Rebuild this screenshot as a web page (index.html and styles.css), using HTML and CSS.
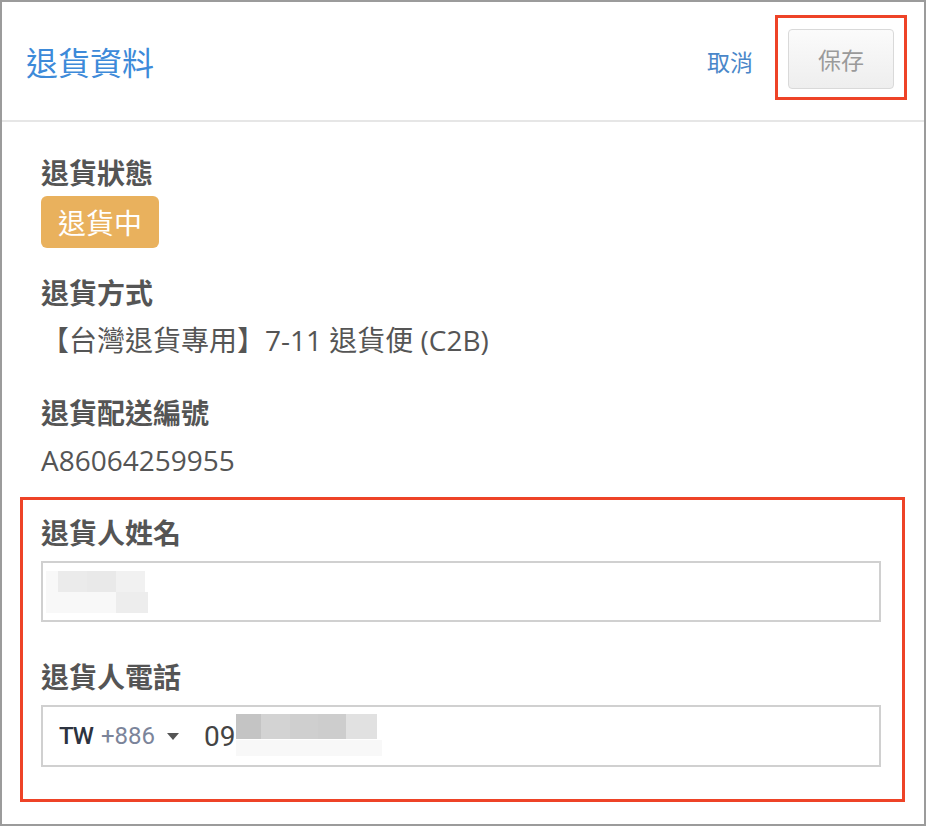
FILE: index.html
```html
<!DOCTYPE html>
<html lang="zh-Hant">
<head>
<meta charset="utf-8">
<title>退貨資料</title>
<link rel="stylesheet" href="styles.css">
</head>
<body>
<div class="panel">
  <header class="header">
    <h1 class="title">退貨資料</h1>
    <a class="cancel">取消</a>
    <div class="mark mark-save">
      <button class="save" type="button">保存</button>
    </div>
  </header>
  <main class="body">
    <div class="info">
      <div class="label">退貨狀態</div>
      <div class="badge">退貨中</div>
      <div class="label label-gap-s">退貨方式</div>
      <div class="value">【台灣退貨專用】7-11 退貨便 (C2B)</div>
      <div class="label label-gap-l">退貨配送編號</div>
      <div class="value">A86064259955</div>
    </div>
    <div class="mark mark-form">
      <div class="label">退貨人姓名</div>
      <div class="field field-name">
        <svg class="blur" width="103" height="42" viewBox="0 0 103 42">
          <rect x="0" y="0" width="12" height="21" fill="#f8f8f8"/>
          <rect x="12" y="0" width="29" height="21" fill="#ebebeb"/>
          <rect x="41" y="0" width="29" height="21" fill="#e9e9e9"/>
          <rect x="70" y="0" width="29" height="21" fill="#f1f1f1"/>
          <rect x="0" y="21" width="70" height="21" fill="#f8f8f8"/>
          <rect x="70" y="21" width="32" height="21" fill="#ededed"/>
        </svg>
      </div>
      <div class="label label-gap-l">退貨人電話</div>
      <div class="field field-phone">
        <span class="country">TW</span>
        <span class="code">+886</span>
        <span class="caret"></span>
        <span class="num">09</span>
        <svg class="blur2" width="146" height="42" viewBox="0 0 146 42">
          <rect x="0" y="0" width="25" height="25" fill="#c4c4c4"/>
          <rect x="25" y="0" width="29" height="25" fill="#d3d3d3"/>
          <rect x="54" y="0" width="28" height="25" fill="#cfcfcf"/>
          <rect x="82" y="0" width="28" height="25" fill="#cdcdcd"/>
          <rect x="110" y="0" width="31" height="25" fill="#e1e1e1"/>
          <rect x="0" y="26" width="146" height="16" fill="#f8f8f8"/>
        </svg>
      </div>
    </div>
  </main>
</div>
</body>
</html>
```

FILE: styles.css
```css
* { box-sizing: border-box; }
html, body { margin: 0; padding: 0; background: #fff; }
body {
  font-family: "Open Sans", "Noto Sans CJK TC", sans-serif;
  color: #555;
}
.panel {
  width: 926px;
  height: 826px;
  border: 2px solid #9b9b9b;
  overflow: hidden;
}
.header {
  display: flex;
  align-items: center;
  height: 120px;
  padding: 0 17px 0 24px;
  border-bottom: 2px solid #e6e6e6;
}
.title {
  flex: 1;
  margin: 0;
  font-family: "Noto Sans CJK TC", sans-serif;
  font-weight: 400;
  font-size: 32px;
  line-height: 40px;
  color: #3d8ad9;
}
.cancel {
  font-family: "Noto Sans CJK TC", sans-serif;
  font-size: 23px;
  color: #4a87c9;
  margin-right: 22px;
  cursor: pointer;
}
.mark {
  border: 3px solid #ee4327;
}
.mark-save {
  padding: 11px 10px 8px 10px;
  margin-top: -7px;
}
.save {
  display: block;
  width: 106px;
  height: 60px;
  border: 1px solid #d9d9d9;
  border-radius: 4px;
  background: linear-gradient(#fbfbfb, #eeeeee);
  font-family: "Noto Sans CJK TC", sans-serif;
  font-size: 23px;
  color: #9a9a9a;
  padding: 0;
}
.body {
  padding: 32px 19px 0 18px;
}
.info {
  padding-left: 21px;
}
.label {
  font-family: "Noto Sans CJK TC", sans-serif;
  font-weight: 700;
  font-size: 28px;
  line-height: 36px;
  color: #555;
}
.label-gap-s { margin-top: 26px; }
.label-gap-l { margin-top: 36px; }
.badge {
  display: inline-block;
  margin-top: 6px;
  height: 52px;
  line-height: 52px;
  padding: 0 17px;
  border-radius: 6px;
  background: #e9b15d;
  color: #fff;
  font-family: "Noto Sans CJK TC", sans-serif;
  font-size: 28px;
}
.value {
  margin-top: 12px;
  font-size: 28px;
  line-height: 36px;
  color: #555;
}
.mark-form {
  margin-top: 19px;
  padding: 14px 21px 32px 18px;
}
.field {
  margin-top: 11px;
  border: 2px solid #d0d0d0;
  background: #fff;
  display: flex;
  align-items: center;
}
.field-name {
  height: 61px;
  padding-left: 3px;
}
.field-phone {
  height: 62px;
  padding-left: 16px;
  font-family: Roboto, "Liberation Sans", sans-serif;
}
.country {
  font-size: 24px;
  font-weight: 500;
  color: #2d3340;
  letter-spacing: -1px;
}
.code {
  margin-left: 8px;
  font-size: 24px;
  color: #7b849a;
}
.caret {
  margin-left: 12px;
  width: 0;
  height: 0;
  border-left: 6px solid transparent;
  border-right: 6px solid transparent;
  border-top: 7px solid #555;
}
.num {
  margin-left: 25px;
  font-size: 28px;
  color: #444;
}
.blur2 {
  display: block;
  align-self: flex-start;
  margin-top: 7px;
}
.blur { display: block; }
```
